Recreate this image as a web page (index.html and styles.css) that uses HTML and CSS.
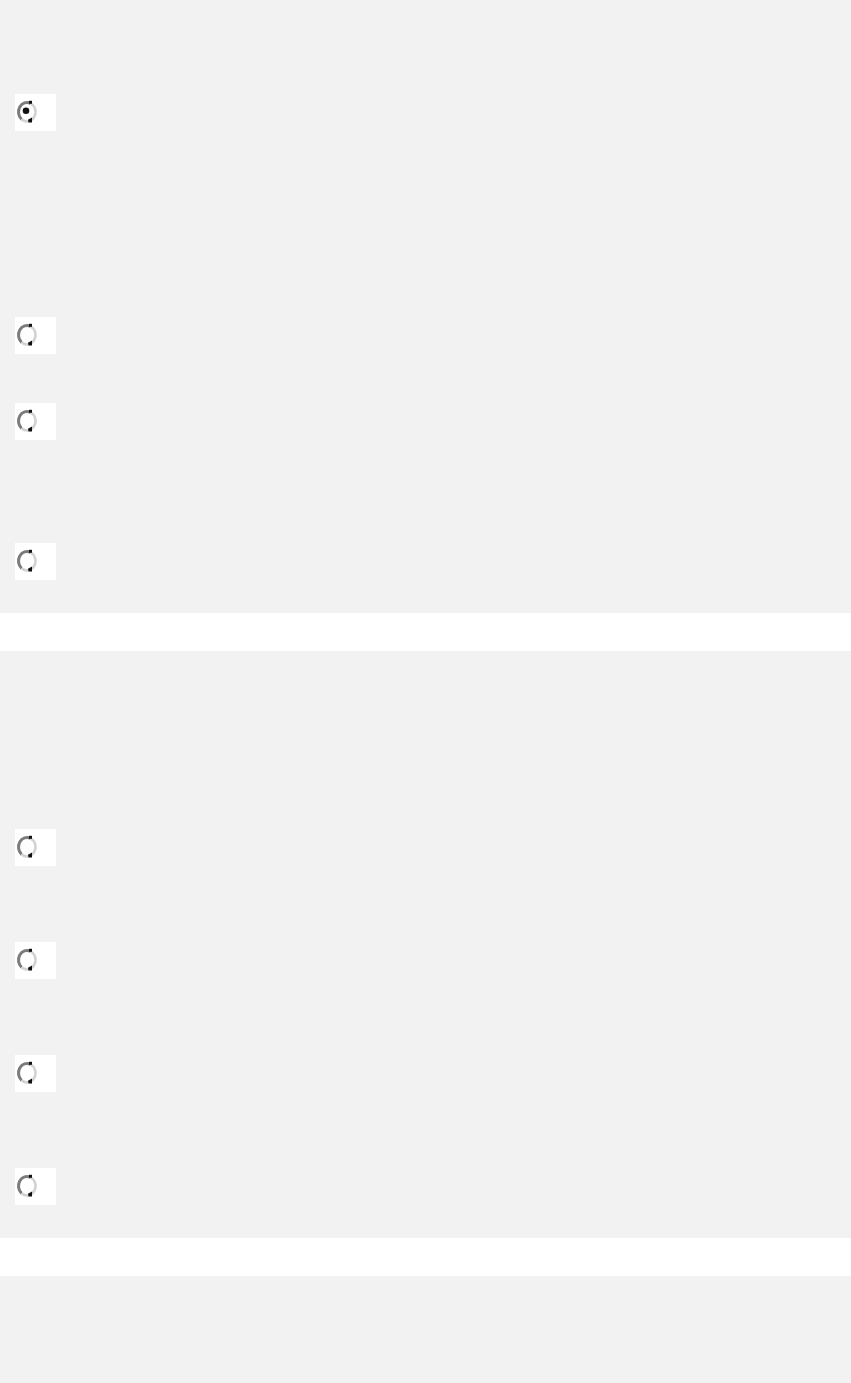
FILE: index.html
```html
<!DOCTYPE html>
<html lang="en">
<head>
    <meta charset="UTF-8">
    <meta name="viewport" content="width=device-width, initial-scale=1.0">
    <title>Options</title>
    <link rel="stylesheet" href="styles.css">
</head>
<body>

<div class="group first">
    <label class="option">
        <svg class="radio" width="21" height="23" viewBox="0 0 21 23">
            <path d="M14.5 3.3 A8.5 9.5 0 0 0 5.6 19.3" fill="none" stroke="#7c7c7c" stroke-width="3"/>
            <path d="M5.6 19.3 A8.5 9.5 0 1 0 14.5 3.3" fill="none" stroke="#d2d2d2" stroke-width="2.6"/>
            <rect x="13" y="0.8" width="3" height="3" fill="#111"/>
            <path d="M12 19.8 L16 17.5 L16 22.5 L12.5 22.5 Z" fill="#111"/>
            <circle cx="10" cy="10.8" r="3.3" fill="#111"/>
        </svg>
    </label>
    <label class="option gap-xl">
        <svg class="radio" width="21" height="23" viewBox="0 0 21 23">
            <path d="M14.5 3.3 A8.5 9.5 0 0 0 5.6 19.3" fill="none" stroke="#7c7c7c" stroke-width="3"/>
            <path d="M5.6 19.3 A8.5 9.5 0 1 0 14.5 3.3" fill="none" stroke="#d2d2d2" stroke-width="2.6"/>
            <rect x="13" y="0.8" width="3" height="3" fill="#111"/>
            <path d="M12 19.8 L16 17.5 L16 22.5 L12.5 22.5 Z" fill="#111"/>
        </svg>
    </label>
    <label class="option gap-s">
        <svg class="radio" width="21" height="23" viewBox="0 0 21 23">
            <path d="M14.5 3.3 A8.5 9.5 0 0 0 5.6 19.3" fill="none" stroke="#7c7c7c" stroke-width="3"/>
            <path d="M5.6 19.3 A8.5 9.5 0 1 0 14.5 3.3" fill="none" stroke="#d2d2d2" stroke-width="2.6"/>
            <rect x="13" y="0.8" width="3" height="3" fill="#111"/>
            <path d="M12 19.8 L16 17.5 L16 22.5 L12.5 22.5 Z" fill="#111"/>
        </svg>
    </label>
    <label class="option gap-l">
        <svg class="radio" width="21" height="23" viewBox="0 0 21 23">
            <path d="M14.5 3.3 A8.5 9.5 0 0 0 5.6 19.3" fill="none" stroke="#7c7c7c" stroke-width="3"/>
            <path d="M5.6 19.3 A8.5 9.5 0 1 0 14.5 3.3" fill="none" stroke="#d2d2d2" stroke-width="2.6"/>
            <rect x="13" y="0.8" width="3" height="3" fill="#111"/>
            <path d="M12 19.8 L16 17.5 L16 22.5 L12.5 22.5 Z" fill="#111"/>
        </svg>
    </label>
</div>

<div class="band"></div>

<div class="group second">
    <label class="option">
        <svg class="radio" width="21" height="23" viewBox="0 0 21 23">
            <path d="M14.5 3.3 A8.5 9.5 0 0 0 5.6 19.3" fill="none" stroke="#7c7c7c" stroke-width="3"/>
            <path d="M5.6 19.3 A8.5 9.5 0 1 0 14.5 3.3" fill="none" stroke="#d2d2d2" stroke-width="2.6"/>
            <rect x="13" y="0.8" width="3" height="3" fill="#111"/>
            <path d="M12 19.8 L16 17.5 L16 22.5 L12.5 22.5 Z" fill="#111"/>
        </svg>
    </label>
    <label class="option gap-m">
        <svg class="radio" width="21" height="23" viewBox="0 0 21 23">
            <path d="M14.5 3.3 A8.5 9.5 0 0 0 5.6 19.3" fill="none" stroke="#7c7c7c" stroke-width="3"/>
            <path d="M5.6 19.3 A8.5 9.5 0 1 0 14.5 3.3" fill="none" stroke="#d2d2d2" stroke-width="2.6"/>
            <rect x="13" y="0.8" width="3" height="3" fill="#111"/>
            <path d="M12 19.8 L16 17.5 L16 22.5 L12.5 22.5 Z" fill="#111"/>
        </svg>
    </label>
    <label class="option gap-m">
        <svg class="radio" width="21" height="23" viewBox="0 0 21 23">
            <path d="M14.5 3.3 A8.5 9.5 0 0 0 5.6 19.3" fill="none" stroke="#7c7c7c" stroke-width="3"/>
            <path d="M5.6 19.3 A8.5 9.5 0 1 0 14.5 3.3" fill="none" stroke="#d2d2d2" stroke-width="2.6"/>
            <rect x="13" y="0.8" width="3" height="3" fill="#111"/>
            <path d="M12 19.8 L16 17.5 L16 22.5 L12.5 22.5 Z" fill="#111"/>
        </svg>
    </label>
    <label class="option gap-m">
        <svg class="radio" width="21" height="23" viewBox="0 0 21 23">
            <path d="M14.5 3.3 A8.5 9.5 0 0 0 5.6 19.3" fill="none" stroke="#7c7c7c" stroke-width="3"/>
            <path d="M5.6 19.3 A8.5 9.5 0 1 0 14.5 3.3" fill="none" stroke="#d2d2d2" stroke-width="2.6"/>
            <rect x="13" y="0.8" width="3" height="3" fill="#111"/>
            <path d="M12 19.8 L16 17.5 L16 22.5 L12.5 22.5 Z" fill="#111"/>
        </svg>
    </label>
</div>

<div class="band"></div>

</body>
</html>
```

FILE: styles.css
```css
body {
    margin: 0;
    font-family: "Liberation Sans", Arial, sans-serif;
    background-color: #f2f2f2;
}
.group {
    display: flex;
    flex-direction: column;
    align-items: flex-start;
    padding-bottom: 33px;
}
.first {
    padding-top: 94px;
}
.second {
    padding-top: 178px;
}
.option {
    display: block;
    width: 41px;
    height: 37px;
    margin-left: 15px;
    background-color: #fff;
}
.radio {
    display: block;
    margin: 6px 0 0 1px;
}
.gap-s {
    margin-top: 49px;
}
.gap-m {
    margin-top: 76px;
}
.gap-l {
    margin-top: 103px;
}
.gap-xl {
    margin-top: 186px;
}
.band {
    height: 38px;
    background-color: #fff;
}
```
